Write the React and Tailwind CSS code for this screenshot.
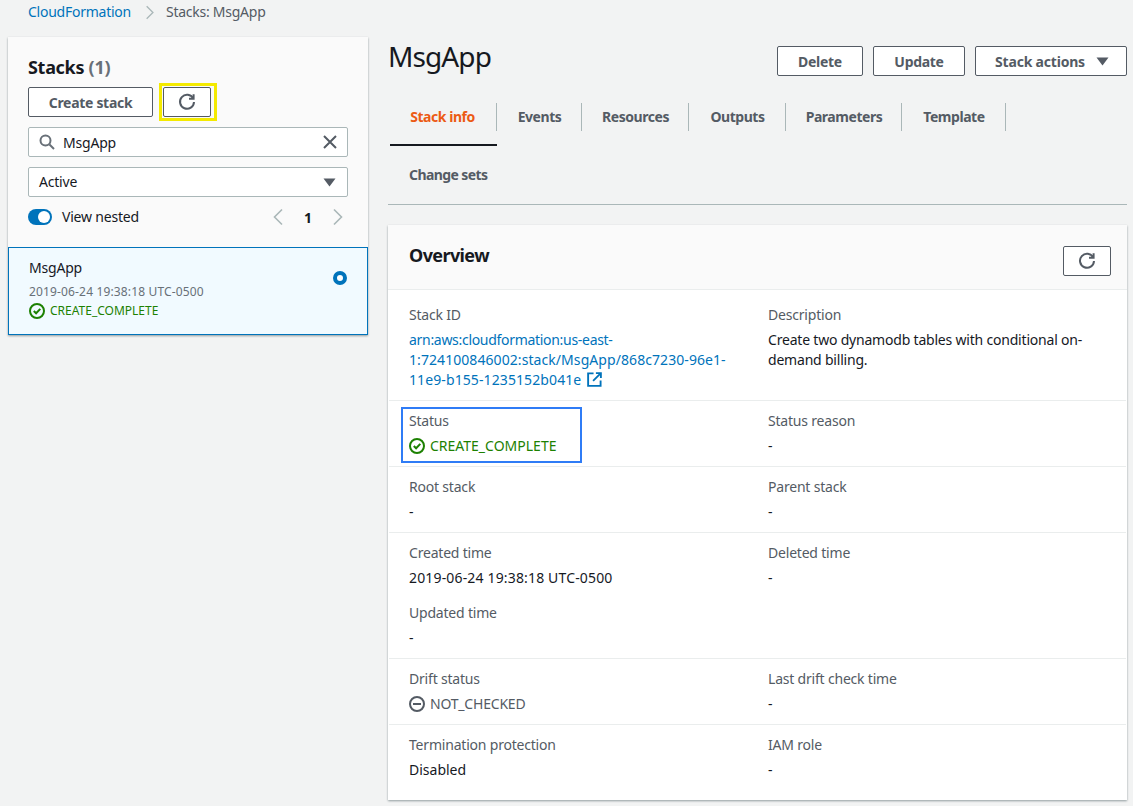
import React from "react";

const RefreshIcon = () => (
  <svg width="18" height="18" viewBox="0 0 18 18" fill="none" stroke="#545b64" strokeWidth="2">
    <path d="M15.2 5.5A7 7 0 1 0 16 9" />
    <path d="M15.6 1.2v4.6h-4.6" />
  </svg>
);

const CheckIcon = ({ size = 16 }) => (
  <svg width={size} height={size} viewBox="0 0 16 16" fill="none" stroke="#1d8102" strokeWidth="2" className="shrink-0">
    <circle cx="8" cy="8" r="7" />
    <path d="M4.8 8l2.3 2.3 4.2-4.4" />
  </svg>
);

const MinusIcon = () => (
  <svg width="16" height="16" viewBox="0 0 16 16" fill="none" stroke="#545b64" strokeWidth="2" className="shrink-0">
    <circle cx="8" cy="8" r="7" />
    <path d="M4 8h8" />
  </svg>
);

const ExternalIcon = () => (
  <svg width="15" height="15" viewBox="0 0 16 16" fill="none" stroke="#0073bb" strokeWidth="2" className="inline-block ml-1.5 -mt-1">
    <path d="M7 1.5H1.2v13.3h13.3V9" />
    <path d="M9.5 1.2h5.3v5.3" />
    <path d="M14.5 1.5L6.5 9.5" />
  </svg>
);

const Chevron = ({ dir, color = "#aab7b8", size = 12 }) => (
  <svg width={size} height={size * 1.5} viewBox="0 0 12 18" fill="none" stroke={color} strokeWidth="1.6">
    <path d={dir === "left" ? "M10 1.5L2.5 9l7.5 7.5" : "M2 1.5L9.5 9 2 16.5"} />
  </svg>
);

const Caret = ({ className = "" }) => (
  <svg width="13" height="9" viewBox="0 0 13 9" fill="#545b64" className={className}>
    <path d="M0.5 0.5h12L6.5 8.5z" />
  </svg>
);

const Field = ({ label, children }) => (
  <div>
    <div className="text-[14px] leading-5 text-[#545b64] tracking-[-0.2px]">{label}</div>
    <div className="mt-[5px] text-[14px] leading-5 text-[#16191f]">{children}</div>
  </div>
);

const Row = ({ left, right, first, last }) => (
  <div className={`grid grid-cols-[359px_1fr] mx-[1px] pl-5 pr-5 ${first ? "pt-[15px]" : "pt-2.5"} ${last ? "pb-5" : "pb-2.5 border-b border-[#eaeded]"}`}>
    <div className="pr-10">{left}</div>
    <div>{right}</div>
  </div>
);

const tabs = [
  ["Stack info", "w-[109px]"],
  ["Events", "w-[85px]"],
  ["Resources", "w-[107px]"],
  ["Outputs", "w-[97px]"],
  ["Parameters", "w-[116px]"],
  ["Template", "w-[104px]"],
];

export default function App() {
  return (
    <div className="w-[1133px] h-[806px] overflow-hidden bg-[#f2f3f3] font-['Noto_Sans',sans-serif] text-[14px] text-[#16191f]">
      {/* Breadcrumb */}
      <div className="h-[24px] pl-7 flex items-center leading-5">
        <span className="text-[#0073bb] tracking-[-0.25px]">CloudFormation</span>
        <span className="ml-[14px] mr-[11px] flex"><Chevron dir="right" size={10} /></span>
        <span className="text-[#545b64] tracking-[-0.25px]">Stacks: MsgApp</span>
      </div>

      <div className="flex mt-[13px] pl-2 gap-5">
        {/* Left panel */}
        <div className="w-[360px] self-start bg-[#fafafa] shadow-[0_1px_2px_rgba(0,28,36,0.4)]">
          <div className="px-5 pt-5">
            <div className="text-[18px] leading-5 font-bold tracking-[-0.3px]">
              Stacks <span className="text-[#687078]">(1)</span>
            </div>
            <div className="mt-2.5 h-[30px] flex items-center">
              <button className="w-[125px] h-[30px] bg-white border border-[#545b64] rounded-[2px] text-[14px] font-bold text-[#545b64] tracking-[-0.3px]">
                Create stack
              </button>
              <div className="ml-[6px] w-[58px] h-[38px] border-[3px] border-[#f4ea00] pl-[1px] flex items-center shrink-0">
                <button className="w-[48px] h-[30px] bg-white border border-[#545b64] rounded-[2px] flex items-center justify-center">
                  <RefreshIcon />
                </button>
              </div>
            </div>
            <div className="mt-2.5 h-[30px] bg-white border border-[#aab7b8] rounded-[2px] flex items-center pl-[10px] pr-[10px]">
              <svg width="16" height="16" viewBox="0 0 16 16" fill="none" stroke="#687078" strokeWidth="2">
                <circle cx="6.5" cy="6.5" r="5" />
                <path d="M10.5 10.5L15 15" />
              </svg>
              <span className="ml-2 flex-1 tracking-[-0.2px]">MsgApp</span>
              <svg width="14" height="14" viewBox="0 0 14 14" fill="none" stroke="#545b64" strokeWidth="2">
                <path d="M1 1l12 12M13 1L1 13" />
              </svg>
            </div>
            <div className="mt-2.5 h-[30px] bg-white border border-[#aab7b8] rounded-[2px] flex items-center justify-between pl-[10px] pr-[11px]">
              <span className="tracking-[-0.2px] -mt-[2px]">Active</span>
              <Caret />
            </div>
            <div className="mt-2.5 h-5 flex items-center">
              <div className="w-6 h-4 rounded-full bg-[#0073bb] relative shrink-0">
                <span className="absolute right-[2px] top-[2px] w-3 h-3 rounded-full bg-white"></span>
              </div>
              <span className="ml-2.5 text-[#16191f] tracking-[-0.2px] -mt-[2px]">View nested</span>
              <div className="ml-auto mr-[4px] flex items-center">
                <Chevron dir="left" size={12} />
                <span className="w-[48px] text-center font-bold">1</span>
                <Chevron dir="right" size={12} />
              </div>
            </div>
          </div>
          {/* Selected stack */}
          <div className="mt-5 h-[88px] bg-[#f1faff] border border-[#0073bb] pl-5 pr-5 pt-[10px] flex justify-between">
            <div>
              <div className="leading-5 tracking-[-0.2px]">MsgApp</div>
              <div className="mt-[4px] text-[12px] leading-5 text-[#687078] tracking-[0.15px]">2019-06-24 19:38:18 UTC-0500</div>
              <div className="-mt-[1px] flex items-center leading-5 text-[12px] text-[#1d8102]">
                <CheckIcon />
                <span className="ml-[5px]">CREATE_COMPLETE</span>
              </div>
            </div>
            <div className="mt-[13px] w-[14px] h-[14px] rounded-full border-[4px] border-[#0073bb] bg-white"></div>
          </div>
        </div>

        {/* Right column */}
        <div className="w-[739px]">
          <div className="flex items-center justify-between h-[42px] -mt-[2px]">
            <h1 className="text-[28px] leading-10 font-normal tracking-[-0.9px]">MsgApp</h1>
            <div className="flex gap-2.5 mt-[10px]">
              <button className="w-[86px] h-[30px] bg-white border border-[#545b64] rounded-[2px] font-bold text-[#545b64] tracking-[-0.3px]">Delete</button>
              <button className="w-[92px] h-[30px] bg-white border border-[#545b64] rounded-[2px] font-bold text-[#545b64] tracking-[-0.3px]">Update</button>
              <button className="w-[152px] h-[30px] bg-white border border-[#545b64] rounded-[2px] font-bold text-[#545b64] tracking-[-0.2px] pl-[2px] flex items-center justify-center gap-[11px]">
                Stack actions <Caret />
              </button>
            </div>
          </div>

          {/* Tabs */}
          <div className="mt-[11px] flex flex-wrap w-[700px]">
            {tabs.map(([name, width], i) => (
              <div key={name} className={`${width} h-[58px] relative flex items-center justify-center font-bold tracking-[-0.45px] ${i === 0 ? "text-[#ec5a13]" : "text-[#545b64]"}`}>
                <span className="-mt-[1px]">{name}</span>
                <span className="absolute right-0 top-[15px] h-[28px] w-px bg-[#aab7b8]"></span>
                {i === 0 && <span className="absolute left-[2px] right-0 bottom-0 h-[2px] bg-[#16191f]"></span>}
              </div>
            ))}
            <div className="w-[120px] h-[58px] pl-[21px] pb-[2px] flex items-center font-bold text-[#545b64] tracking-[-0.6px]">
              Change sets
            </div>
          </div>
          <div className="h-px bg-[#aab7b8]"></div>

          {/* Overview card */}
          <div className="mt-5 bg-white shadow-[0_1px_2px_rgba(0,28,36,0.4)]">
            <div className="h-[65px] bg-[#fafafa] border-b border-[#eaeded] pl-[21px] pr-4 flex items-start justify-between">
              <h2 className="mt-[19px] text-[18px] leading-[22px] font-bold tracking-[-0.6px]">Overview</h2>
              <button className="mt-[21px] w-[48px] h-[30px] bg-white border border-[#545b64] rounded-[2px] flex items-center justify-center">
                <RefreshIcon />
              </button>
            </div>
            <Row
              first
              left={
                <Field label="Stack ID">
                  <span className="text-[#0073bb]">
                    <span className="tracking-[-0.3px]">arn:aws:cloudformation:us-east-</span>
                    <br />
                    <span className="tracking-[0.07px]">1:724100846002:stack/MsgApp/868c7230-96e1-</span>
                    <br />
                    <span className="tracking-[0.1px]">11e9-b155-1235152b041e</span>
                    <ExternalIcon />
                  </span>
                </Field>
              }
              right={
                <Field label="Description">
                  <span className="tracking-[-0.2px]">
                    Create two dynamodb tables with conditional on-
                    <br />
                    demand billing.
                  </span>
                </Field>
              }
            />
            <Row
              left={
                <div className="relative">
                  <Field label="Status">
                    <span className="flex items-center text-[#1d8102]">
                      <CheckIcon />
                      <span className="ml-[5px]">CREATE_COMPLETE</span>
                    </span>
                  </Field>
                  <div className="absolute -left-2 -top-1 w-[181px] h-[56px] border-2 border-[#2f7cf6]"></div>
                </div>
              }
              right={<Field label="Status reason">-</Field>}
            />
            <Row left={<Field label="Root stack">-</Field>} right={<Field label="Parent stack">-</Field>} />
            <Row
              left={
                <div className="flex flex-col gap-[15px]">
                  <Field label="Created time"><span className="tracking-[0.16px]">2019-06-24 19:38:18 UTC-0500</span></Field>
                  <Field label="Updated time">-</Field>
                </div>
              }
              right={<Field label="Deleted time">-</Field>}
            />
            <Row
              left={
                <Field label="Drift status">
                  <span className="flex items-center text-[#545b64] tracking-[-0.2px]">
                    <MinusIcon />
                    <span className="ml-[5px]">NOT_CHECKED</span>
                  </span>
                </Field>
              }
              right={<Field label="Last drift check time">-</Field>}
            />
            <Row last left={<Field label="Termination protection">Disabled</Field>} right={<Field label="IAM role">-</Field>} />
          </div>
        </div>
      </div>
    </div>
  );
}
